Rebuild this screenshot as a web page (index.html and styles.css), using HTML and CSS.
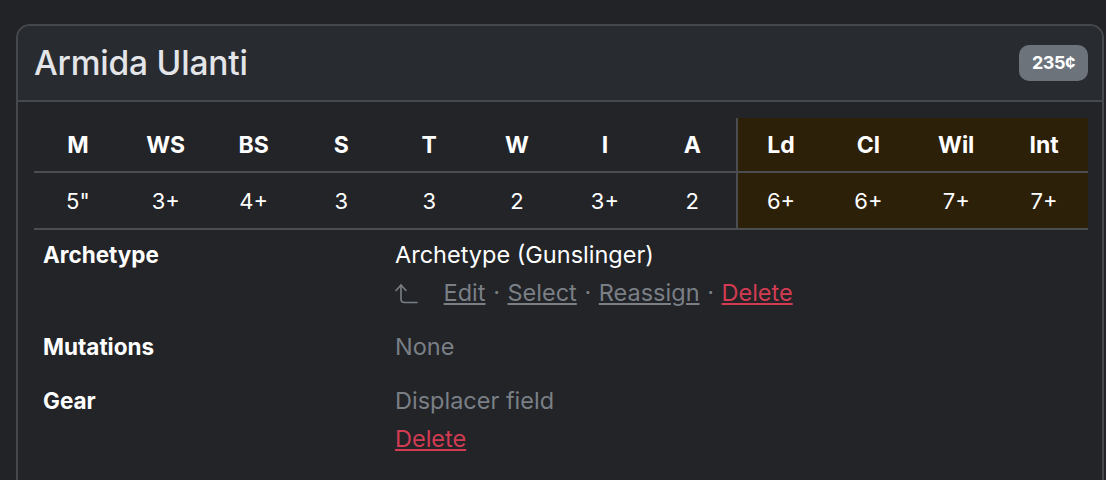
FILE: index.html
```html
<!DOCTYPE html>
<html lang="en">
<head>
    <meta charset="UTF-8">
    <meta name="viewport" content="width=device-width, initial-scale=1.0">
    <title>Fighter - Armida Ulanti</title>
    <link rel="stylesheet" href="styles.css">
</head>
<body>

<div class="card">
    <div class="card-header">
        <h3 class="fighter-name">Armida Ulanti</h3>
        <span class="badge">235¢</span>
    </div>
    <div class="card-body">
        <table class="stats">
            <thead>
                <tr>
                    <th>M</th><th>WS</th><th>BS</th><th>S</th><th>T</th><th>W</th><th>I</th><th>A</th>
                    <th class="stat-mental first">Ld</th><th class="stat-mental">Cl</th><th class="stat-mental">Wil</th><th class="stat-mental">Int</th>
                </tr>
            </thead>
            <tbody>
                <tr>
                    <td>5"</td><td>3+</td><td>4+</td><td>3</td><td>3</td><td>2</td><td>3+</td><td>2</td>
                    <td class="stat-mental first">6+</td><td class="stat-mental">6+</td><td class="stat-mental">7+</td><td class="stat-mental">7+</td>
                </tr>
            </tbody>
        </table>

        <div class="detail-row">
            <div class="detail-label">Archetype</div>
            <div class="detail-value">
                <div>Archetype (Gunslinger)</div>
                <div class="actions">
                    <svg class="icon-up" width="24" height="22" viewBox="0 0 24 22" fill="none" stroke="currentColor" stroke-width="1.6" stroke-linecap="round" stroke-linejoin="round">
                        <path d="M1 7.5 L6 2 L11 7.5"/>
                        <path d="M6 2 V16 Q6 19.5 9.5 19.5 H22"/>
                    </svg>
                    <a href="#" class="link-muted">Edit</a> &middot;
                    <a href="#" class="link-muted">Select</a> &middot;
                    <a href="#" class="link-muted">Reassign</a> &middot;
                    <a href="#" class="link-danger">Delete</a>
                </div>
            </div>
        </div>

        <div class="detail-row">
            <div class="detail-label">Mutations</div>
            <div class="detail-value muted">None</div>
        </div>

        <div class="detail-row">
            <div class="detail-label">Gear</div>
            <div class="detail-value">
                <div class="muted">Displacer field</div>
                <a href="#" class="link-danger">Delete</a>
            </div>
        </div>
    </div>
</div>

</body>
</html>
```

FILE: styles.css
```css
body {
    font-family: Inter, "Noto Sans", sans-serif;
    background: #212327;
    color: #ffffff;
    margin: 0;
    padding: 24px 2px 0 16px;
}
.card {
    border: 2px solid #45484d;
    border-radius: 14px;
    background: #222428;
    overflow: hidden;
}
.card-header {
    display: flex;
    align-items: center;
    justify-content: space-between;
    background: #282b30;
    border-bottom: 2px solid #45484d;
    padding: 0 14px 0 16px;
    height: 74px;
}
.fighter-name {
    margin: 0;
    font-size: 33.5px;
    font-weight: 500;
    color: #e3e5e9;
    letter-spacing: -0.2px;
}
.badge {
    background: #6c737b;
    color: #fff;
    font-weight: 700;
    font-size: 18px;
    padding: 7px 13px 8px;
    border-radius: 10px;
    letter-spacing: -0.5px;
}
.card-body {
    padding: 16px 14px 20px 16px;
}
.stats {
    width: 100%;
    border-collapse: collapse;
    table-layout: fixed;
    margin-bottom: 6px;
}
.stats th,
.stats td {
    text-align: center;
    font-size: 22px;
    border-bottom: 2px solid #4a4d52;
}
.stats th {
    font-weight: 700;
    height: 51px;
    font-size: 23px;
}
.stats td {
    height: 53px;
}
.stat-mental {
    background: #2d2009;
}
.stat-mental.first {
    border-left: 2px solid #4a4d52;
}
.detail-row {
    display: flex;
    font-size: 22.5px;
    line-height: 38px;
    margin-bottom: 16px;
}
.detail-label {
    width: 352px;
    padding-left: 9px;
    font-weight: 700;
}
.detail-value {
    flex: 1;
    padding-left: 0;
    font-size: 23.5px;
}
.muted {
    color: #7a7f86;
}
.actions {
    color: #7a7f86;
    word-spacing: 1px;
}
.icon-up {
    vertical-align: -4px;
    margin-right: 17px;
}
.link-muted {
    color: #7a7f86;
}
.link-danger {
    color: #d23b52;
}
```
